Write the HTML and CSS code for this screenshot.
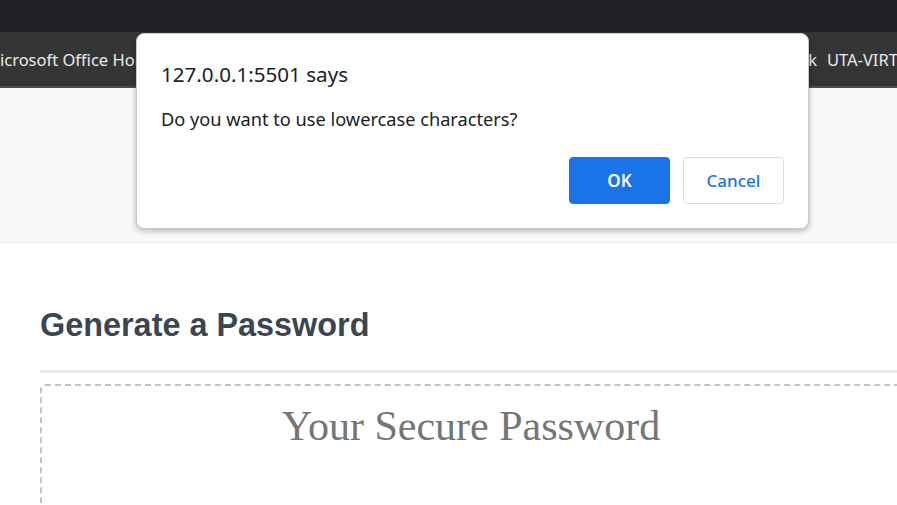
FILE: index.html
```html
<!DOCTYPE html>
<html lang="en">
<head>
<meta charset="utf-8">
<title>Password Generator</title>
<link rel="stylesheet" href="styles.css">
</head>
<body>
  <div class="tabstrip"></div>
  <div class="bookmarks">
    <div class="bm-main">
      <span class="bm bm-first">Microsoft Office Home</span>
      <span class="bm">Outlook</span>
    </div>
    <span class="bm">UTA-VIRTUAL</span>
  </div>
  <header class="jumbo"></header>
  <main class="wrapper">
    <h2 class="title">Generate a Password</h2>
    <div class="rule"></div>
    <section class="card">
      <h1 class="card-title">Your Secure Password</h1>
    </section>
  </main>

  <div class="dialog" role="alertdialog">
    <div class="dialog-title">127.0.0.1:5501 says</div>
    <div class="dialog-msg">Do you want to use lowercase characters?</div>
    <div class="dialog-actions">
      <button class="btn btn-ok">OK</button>
      <button class="btn btn-cancel">Cancel</button>
    </div>
  </div>
</body>
</html>
```

FILE: styles.css
```css
html, body {
  margin: 0;
  padding: 0;
  overflow: hidden;
  background: #ffffff;
}
body {
  width: 897px;
  height: 505px;
  position: relative;
  font-family: "Liberation Sans", Arial, sans-serif;
}
.tabstrip {
  height: 32px;
  background: #202124;
}
.bookmarks {
  height: 54px;
  background: #353535;
  border-bottom: 2px solid #4e4e4e;
  display: flex;
  align-items: center;
  overflow: hidden;
  white-space: nowrap;
  font-family: "Noto Sans", "Open Sans", sans-serif;
  font-size: 16.5px;
  color: #e8eaed;
}
.bm-main {
  flex: none;
  width: 827px;
  display: flex;
  justify-content: space-between;
  padding-right: 10px;
  box-sizing: border-box;
}
.bm { flex: none; }
.bm-first { margin-left: -15px; }
.jumbo {
  height: 154px;
  background: #f8f9fa;
  border-bottom: 1px solid #eceef0;
}
.wrapper {
  padding-left: 40px;
  width: 862px;
}
.title {
  margin: 64px 0 0 0;
  font-size: 32.4px;
  line-height: 37px;
  font-weight: bold;
  color: #3a4651;
}
.rule {
  margin-top: 26px;
  height: 3px;
  background: #e8e9ea;
}
.card {
  margin-top: 11px;
  border: 2px dashed #c0c4cb;
  border-radius: 5px;
  height: 200px;
  padding-top: 17px;
  box-sizing: border-box;
}
.card-title {
  margin: 0;
  text-align: center;
  font-family: "Liberation Serif", "Times New Roman", serif;
  font-weight: normal;
  font-size: 42px;
  line-height: 47px;
  color: #757575;
}
.dialog {
  position: absolute;
  left: 136px;
  top: 33px;
  width: 673px;
  height: 196px;
  box-sizing: border-box;
  padding: 28px 24px 0 24px;
  background: #ffffff;
  border: 1px solid #c9c9c9;
  border-radius: 8px;
  box-shadow: 0 2px 6px rgba(0, 0, 0, 0.28);
  font-family: "Noto Sans", "Open Sans", sans-serif;
  color: #202124;
}
.dialog-title {
  font-size: 20.6px;
  line-height: 25px;
}
.dialog-msg {
  margin-top: 21px;
  font-size: 18.2px;
  line-height: 22px;
}
.dialog-actions {
  margin-top: 27px;
  display: flex;
  justify-content: flex-end;
  gap: 13px;
}
.btn {
  width: 101px;
  height: 47px;
  border-radius: 4px;
  font-family: "Noto Sans", "Open Sans", sans-serif;
  font-size: 17px;
  font-weight: 600;
  cursor: pointer;
}
.btn-ok {
  background: #1a73e8;
  border: 1px solid #1a73e8;
  color: #ffffff;
}
.btn-cancel {
  background: #ffffff;
  border: 1px solid #dadce0;
  color: #1a73e8;
  font-weight: 500;
}
```
